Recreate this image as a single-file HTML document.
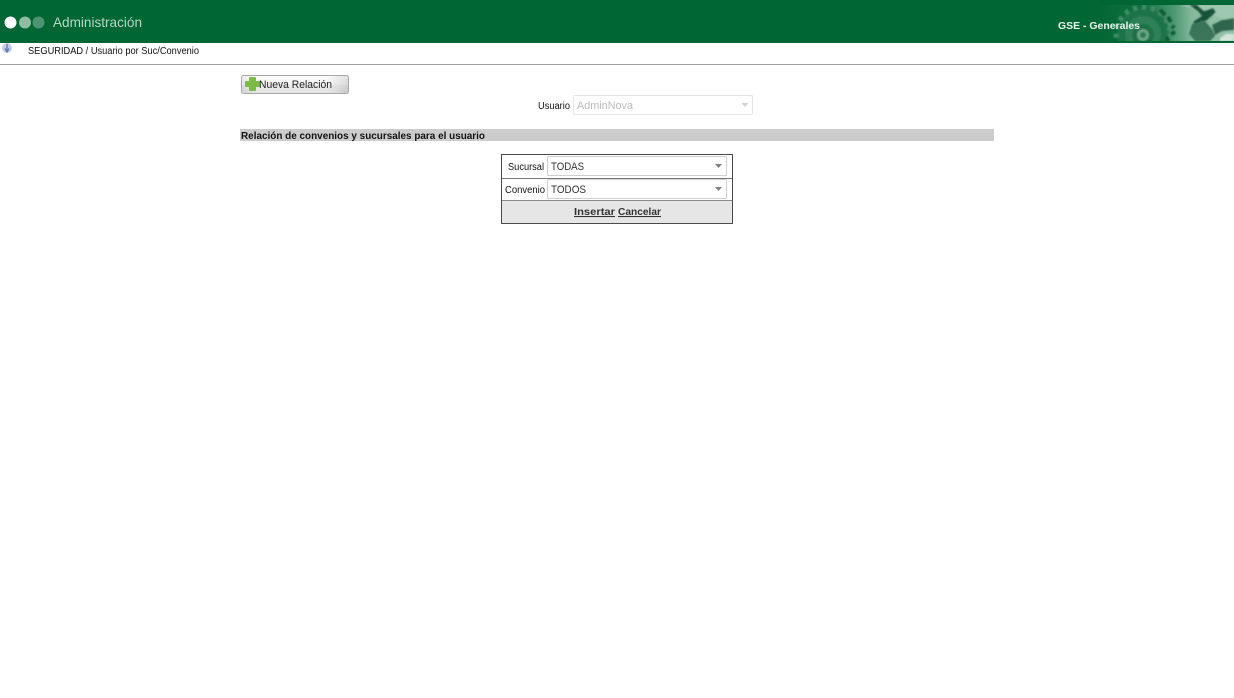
<!DOCTYPE html>
<html><head><meta charset="utf-8"><style>
html,body{margin:0;padding:0;background:#fff;width:1234px;height:698px;overflow:hidden}
svg{display:block}
text{font-family:"Liberation Sans",sans-serif}
</style></head><body>
<svg width="1234" height="698" viewBox="0 0 1234 698" xmlns="http://www.w3.org/2000/svg">
<defs>
<linearGradient id="hg" x1="0" x2="1" y1="0" y2="0"><stop offset="0" stop-color="#006633"/><stop offset=".35" stop-color="#12703f"/><stop offset=".58" stop-color="#4f9a75"/><stop offset=".7" stop-color="#86b89c"/><stop offset="1" stop-color="#96c2a9"/></linearGradient>
<linearGradient id="btn" x1="0" x2="0" y1="0" y2="1"><stop offset="0" stop-color="#fcfcfc"/><stop offset=".5" stop-color="#f2f2f2"/><stop offset=".55" stop-color="#e8e8e8"/><stop offset="1" stop-color="#e0e0e0"/></linearGradient>
<linearGradient id="btn2" x1="0" x2="1" y1="0" y2="0"><stop offset="0" stop-color="#000" stop-opacity=".05"/><stop offset=".1" stop-color="#fff" stop-opacity=".1"/><stop offset=".8" stop-color="#fff" stop-opacity=".1"/><stop offset="1" stop-color="#000" stop-opacity=".1"/></linearGradient>
<clipPath id="c"><rect x="1094" y="5" width="140" height="36"/></clipPath>
<filter id="b" x="-5%" y="-5%" width="110%" height="110%"><feGaussianBlur stdDeviation=".7"/></filter>
<filter id="t" x="-5%" y="-20%" width="110%" height="140%"><feGaussianBlur stdDeviation=".25"/></filter>
</defs>
<rect width="1234" height="43" fill="#006633"/>
<g filter="url(#t)">
<circle cx="10.500" cy="22.500" r="6" fill="#fff"/>
<circle cx="25" cy="22.500" r="6" fill="#8fbca3"/>
<circle cx="38.500" cy="22.500" r="6" fill="#4f9472"/>
</g>
<text x="53" y="27" font-size="14" fill="#b9d6c6" textLength="89" lengthAdjust="spacingAndGlyphs">Administración</text>
<g clip-path="url(#c)">
<rect x="1094" y="5" width="140" height="36" fill="url(#hg)"/>
<g filter="url(#b)">
<circle cx="1143" cy="34" r="26" fill="#1a7349"/>
<circle cx="1143" cy="34" r="27" fill="none" stroke="#3f8d68" stroke-width="5" stroke-dasharray="4 5"/>
<path d="M1160 10 L1165 15 M1168 17 L1171 22 M1172 26 L1174 28 M1171 34 L1175 32 M1169 41 L1166 37" fill="none" stroke="#0d5a36" stroke-width="4"/>
<circle cx="1143" cy="34" r="18" fill="#2f8059"/>
<circle cx="1143" cy="35" r="11" fill="#1f7149"/>
<circle cx="1143" cy="35" r="6" fill="#6aa686"/>
<circle cx="1143" cy="35" r="3" fill="#2d7c57"/>
<path d="M1180 5 L1234 5 L1234 23 L1218 17 L1210 12Z" fill="#9fc8b0"/>
<path d="M1189 5 L1197 5 L1204 11 L1213 8 L1216 12 L1207 20 L1197 25 L1193 22 L1202 16 L1198 11Z" fill="#14523a"/>
<path d="M1192 24 L1204 20 L1212 29 L1215 36 L1210 41 L1195 41 L1189 34Z" fill="#3a7459"/>
<path d="M1212 25 L1222 20 L1234 18 L1234 30 L1222 31 L1215 35Z" fill="#2f664d"/>
<path d="M1220 38 L1226 34 L1234 34 L1234 41 L1220 41Z" fill="#d4e4da"/>
</g>
</g>
<text x="1058" y="29" font-size="10.500" font-weight="bold" fill="#e9f3ed" textLength="82" lengthAdjust="spacingAndGlyphs">GSE - Generales</text>

<circle cx="7" cy="48" r="5" fill="#c3cee6"/>
<path d="M7 44 V52 M5 48.500 L7 52 L9 48.500" fill="none" stroke="#5a7fb5" stroke-width="1.300"/>
<text x="28" y="54" font-size="10" fill="#111" textLength="171" lengthAdjust="spacingAndGlyphs">SEGURIDAD / Usuario por Suc/Convenio</text>
<rect x="0" y="64" width="1234" height="1" fill="#a0a0a0"/>

<rect x="241.500" y="75.500" width="107" height="18" rx="2" fill="url(#btn)" stroke="#a8a8a8"/>
<rect x="242" y="76" width="106" height="17" rx="2" fill="url(#btn2)"/>
<path d="M250 77 h5 a1 1 0 0 1 1 1 v3 h3 a1 1 0 0 1 1 1 v4 a1 1 0 0 1 -1 1 h-3 v3 a1 1 0 0 1 -1 1 h-5 a1 1 0 0 1 -1 -1 v-3 h-3 a1 1 0 0 1 -1 -1 v-4 a1 1 0 0 1 1 -1 h3 v-3 a1 1 0 0 1 1 -1z" fill="#7dbb4a" filter="url(#t)"/>
<text x="259" y="88" font-size="11" fill="#222" textLength="73" lengthAdjust="spacingAndGlyphs">Nueva Relación</text>

<text x="538" y="109" font-size="10" fill="#111" textLength="32" lengthAdjust="spacingAndGlyphs">Usuario</text>
<rect x="573.500" y="95.500" width="179" height="19" rx="1" fill="#fff" stroke="#e6e6e6"/>
<text x="577" y="109" font-size="11" fill="#bcbcbc" textLength="56" lengthAdjust="spacingAndGlyphs">AdminNova</text>
<path d="M741.500 103 h7 l-3.500 4z" fill="#d2d2d2"/>

<rect x="240" y="129" width="754" height="12" fill="#cccccc"/>
<text x="241" y="139" font-size="10" font-weight="bold" fill="#111" textLength="244" lengthAdjust="spacingAndGlyphs">Relación de convenios y sucursales para el usuario</text>

<rect x="501.500" y="154.500" width="231" height="69" fill="#fff" stroke="#4a4a4a"/>
<rect x="502" y="178" width="230" height="1" fill="#777"/>
<rect x="502" y="201" width="230" height="22" fill="#e6e6e6"/>
<rect x="502" y="200" width="230" height="1" fill="#8a8a8a"/>
<text x="508" y="170" font-size="10" fill="#111" textLength="36" lengthAdjust="spacingAndGlyphs">Sucursal</text>
<rect x="547.500" y="156.500" width="179" height="19" rx="1" fill="#fff" stroke="#cfcfcf"/>
<text x="551" y="170" font-size="11" fill="#333" textLength="33" lengthAdjust="spacingAndGlyphs">TODAS</text>
<path d="M715 164 h7 l-3.500 4z" fill="#808080"/>
<text x="505" y="193" font-size="10" fill="#111" textLength="40" lengthAdjust="spacingAndGlyphs">Convenio</text>
<rect x="547.500" y="179.500" width="179" height="19" rx="1" fill="#fff" stroke="#cfcfcf"/>
<text x="551" y="193" font-size="11" fill="#333" textLength="35" lengthAdjust="spacingAndGlyphs">TODOS</text>
<path d="M715 187 h7 l-3.500 4z" fill="#808080"/>
<text x="574" y="215" font-size="10.500" font-weight="bold" fill="#333" textLength="41" lengthAdjust="spacingAndGlyphs" text-decoration="underline">Insertar</text>
<text x="618" y="215" font-size="10.500" font-weight="bold" fill="#333" textLength="43" lengthAdjust="spacingAndGlyphs" text-decoration="underline">Cancelar</text>
</svg>
</body></html>
